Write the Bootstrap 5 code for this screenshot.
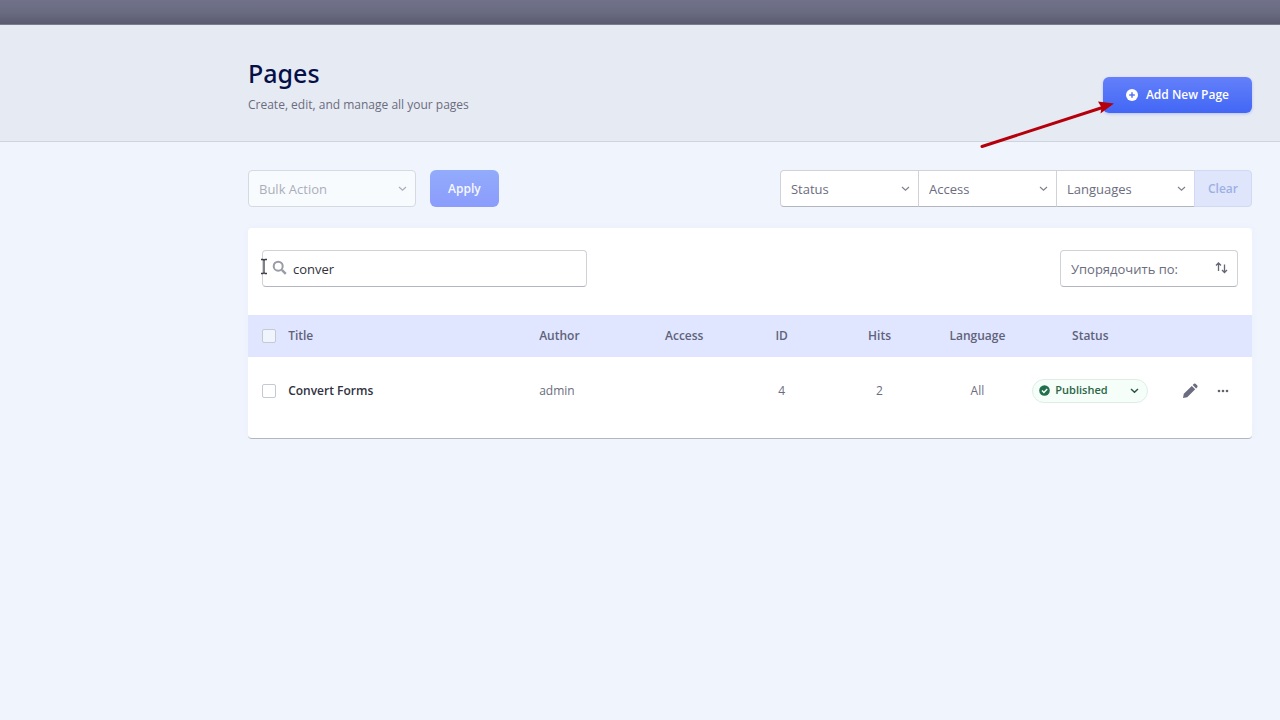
<!DOCTYPE html>
<html lang="en">
<head>
<meta charset="utf-8">
<meta name="viewport" content="width=device-width, initial-scale=1">
<title>Pages</title>
<link href="https://cdn.jsdelivr.net/npm/bootstrap@5.3.0/dist/css/bootstrap.min.css" rel="stylesheet">
<style>
  body { font-family: "Open Sans", "Noto Sans", sans-serif; font-size: 12px; line-height: 18px; color: #6b6c7e; background: #f0f4fd; }
  .topbar { height: 25px; background: linear-gradient(#71728a, #696b80 50%, #5b5c72 94%, #8a8ba0); }
  .gutter { padding-left: 248px; padding-right: 28px; }
  .page-head { background: #e6eaf3; border-bottom: 1px solid #ced4de; padding-top: 31px; padding-bottom: 27px; }
  .page-head h1 { font-family: "Noto Sans", sans-serif; font-size: 25px; line-height: 34px; font-weight: 500; color: #050f48; margin-bottom: 6px; }
  .btn { font-size: 12px; line-height: 18px; font-weight: 600; border-radius: 6px; }
  .add-wrap { margin-top: 20px; }
  .btn-add { height: 36px; padding: 0 23px; color: #fff; background: linear-gradient(#6480fa, #4267f5); border: 0; box-shadow: 0 1px 3px #4267f550; }
  .btn-add:hover { color: #fff; background: #4267f5; }
  .btn-apply { height: 37px; padding: 0 18px; }
  .btn-apply:disabled { color: #f6f8ff; background: linear-gradient(#92abfb, #8b9cfc); border: 0; opacity: 1; }
  .form-select, .form-control { font-size: 13px; line-height: 18px; height: 37px; border: 1px solid #d0d2d8; border-bottom-color: #b3b6bf; border-radius: 4px; color: #6b6c7e; background-color: #fff; }
  .form-select { padding: 0 30px 0 10px; background-size: 9px 9px; background-position: right 8px center;
    background-image: url("data:image/svg+xml,%3Csvg xmlns='http://www.w3.org/2000/svg' viewBox='0 0 9 9'%3E%3Cpath fill='none' stroke='%23808290' stroke-width='1.200' d='M1 3l3.500 3.200L8 3'/%3E%3C/svg%3E"); }
  .toolbar { padding-top: 28px; margin-bottom: 21px; }
  .bulk { width: 168px; }
  .bulk:disabled { color: #abaeba; background-color: #f8fbfe; border-color: #d5d9e2;
    background-image: url("data:image/svg+xml,%3Csvg xmlns='http://www.w3.org/2000/svg' viewBox='0 0 9 9'%3E%3Cpath fill='none' stroke='%23abaeba' stroke-width='1.200' d='M1 3l3.500 3.200L8 3'/%3E%3C/svg%3E"); }
  .bulk-group { gap: 14px; }
  .filters .form-select { width: 139px; margin-right: -1px; border-radius: 0; }
  .filters .form-select:first-child { border-radius: 4px 0 0 4px; }
  .btn-clear { height: 37px; padding: 0 13px; border-radius: 0 4px 4px 0; }
  .btn-clear:disabled { color: #9db0e6; background: #dfe5fa; border: 1px solid #d2daf3; opacity: 1; }
  .panel { background: #fff; border-radius: 4px; border-bottom: 1px solid #b3b6bf; box-shadow: 0 0 6px #e9eefa; padding-bottom: 14px; }
  .panel-tools { padding: 22px 14px 28px; }
  .search { width: 325px; }
  .search .form-control { padding: 0 12px 0 30px; color: #31323d; }
  .search .lens { left: 10px; top: 10px; }
  .search .caret { left: -2px; top: 8px; }
  .order { width: 178px; }
  .order .form-select { background-image: none; }
  .order svg { right: 10px; top: 11px; }
  .over { position: absolute; pointer-events: none; }
  .pages-table { table-layout: fixed; margin: 0; --bs-table-bg: transparent; }
  .pages-table th, .pages-table td { border: 0; padding: 0; vertical-align: middle; color: #6b6c7e; }
  .pages-table thead th { height: 42px; background: #e0e6ff; font-weight: 600; color: #5f6279; }
  .pages-table tbody td, .pages-table tbody th { height: 67px; }
  .pages-table tbody th { font-weight: 600; color: #31323f; }
  .pages-table tr > :first-child { padding-left: 14px; }
  .form-check-input { width: 14px; height: 14px; border: 1px solid #c5c9d2; margin: 0; float: none; background-color: #fff; display: block; }
  .form-check-input[type=checkbox] { border-radius: 2px; }
  thead .form-check-input { background-color: #f0f5fd; }
  .state { width: 116px; }
  .state .form-select { height: 24px; font-size: 11px; font-weight: 600; color: #2b6646; padding: 0 20px 2px 22px; border: 1px solid #dcefe5; border-radius: 12px; background-color: #f6fefa;
    background-image: url("data:image/svg+xml,%3Csvg xmlns='http://www.w3.org/2000/svg' viewBox='0 0 9 9'%3E%3Cpath fill='none' stroke='%23275741' stroke-width='1.500' d='M1 3l3.500 3.200L8 3'/%3E%3C/svg%3E"); }
  .state svg { left: 7px; top: 6px; }
  .actions { gap: 19px; padding-right: 23px; }
  .tool { border: 0; background: none; padding: 0; display: flex; }
  .pointer { left: -124px; top: 20px; }
</style>
</head>
<body>
<div class="topbar"></div>
<header class="page-head gutter d-flex justify-content-between align-items-center">
  <div>
    <h1>Pages</h1>
    <p class="mb-0">Create, edit, and manage all your pages</p>
  </div>
  <div class="add-wrap position-relative">
    <button type="button" class="btn btn-add d-flex align-items-center gap-2">
      <svg width="12" height="12" viewBox="0 0 12 12" aria-hidden="true"><circle cx="6" cy="6" r="6" fill="#fff"/><path d="M6 3.200v5.600M3.200 6h5.600" stroke="#5575f8" stroke-width="1.500"/></svg>
      Add New Page
    </button>
    <svg class="over pointer" width="138" height="54" viewBox="0 0 138 54" aria-hidden="true"><path d="M3 49.500L122 11" stroke="#b5000c" stroke-width="3" stroke-linecap="round"/><path d="M135 6.500L119 4.500L122.500 10.500L121.500 16.500Z" fill="#b5000c"/></svg>
  </div>
</header>

<main class="gutter">
  <div class="toolbar d-flex justify-content-between">
    <div class="d-flex bulk-group">
      <select class="form-select bulk" aria-label="Bulk action" disabled><option>Bulk Action</option></select>
      <button type="button" class="btn btn-apply" disabled>Apply</button>
    </div>
    <div class="d-flex filters">
      <select class="form-select" aria-label="Status"><option>Status</option></select>
      <select class="form-select" aria-label="Access"><option>Access</option></select>
      <select class="form-select" aria-label="Languages"><option>Languages</option></select>
      <button type="button" class="btn btn-clear" disabled>Clear</button>
    </div>
  </div>

  <section class="panel">
    <div class="panel-tools d-flex justify-content-between">
      <div class="search position-relative">
        <input class="form-control" type="text" value="conver" aria-label="Search pages">
        <svg class="over lens" width="15" height="15" viewBox="0 0 15 15" fill="none" stroke="#999ba6" aria-hidden="true"><circle cx="6.200" cy="6.200" r="4.500" stroke-width="2"/><path d="M9.800 9.800l4 4" stroke-width="2.400"/></svg>
        <svg class="over caret" width="8" height="17" viewBox="0 0 8 17" fill="none" stroke="#3d3e4a" aria-hidden="true"><path d="M1 1.500h2l1 1 1-1h2M4 2v13M1 15.500h2l1-1 1 1h2" stroke-width="1.300"/></svg>
      </div>
      <div class="order position-relative">
        <select class="form-select" aria-label="Упорядочить по"><option>Упорядочить по:</option></select>
        <svg class="over" width="13" height="14" viewBox="0 0 13 14" fill="none" stroke="#646675" stroke-width="1.300" aria-hidden="true"><path d="M3.500 10V2M1 4.500L3.500 2 6 4.500M9.500 3.500v8M7 9L9.500 11.500 12 9"/></svg>
      </div>
    </div>

    <table class="table pages-table">
      <colgroup>
        <col style="width:4%"><col style="width:25%"><col style="width:9.600%"><col style="width:9.700%"><col style="width:9.700%"><col style="width:9.800%"><col style="width:9.700%"><col style="width:12.800%"><col style="width:9.700%">
      </colgroup>
      <thead>
        <tr>
          <th><input class="form-check-input" type="checkbox" aria-label="Select all"></th>
          <th scope="col">Title</th>
          <th scope="col">Author</th>
          <th scope="col" class="text-center">Access</th>
          <th scope="col" class="text-center">ID</th>
          <th scope="col" class="text-center">Hits</th>
          <th scope="col" class="text-center">Language</th>
          <th scope="col" class="text-center">Status</th>
          <th></th>
        </tr>
      </thead>
      <tbody>
        <tr>
          <td><input class="form-check-input" type="checkbox" aria-label="Select Convert Forms"></td>
          <th scope="row">Convert Forms</th>
          <td>admin</td>
          <td></td>
          <td class="text-center">4</td>
          <td class="text-center">2</td>
          <td class="text-center">All</td>
          <td>
            <div class="state position-relative mx-auto">
              <select class="form-select" aria-label="Page status"><option>Published</option></select>
              <svg class="over" width="11" height="11" viewBox="0 0 11 11" aria-hidden="true"><circle cx="5.500" cy="5.500" r="5.300" fill="#20704b"/><path d="M3 5.600l1.900 1.900L8.200 4" fill="none" stroke="#fff" stroke-width="1.400"/></svg>
            </div>
          </td>
          <td>
            <div class="d-flex align-items-center justify-content-end actions">
              <button type="button" class="tool" aria-label="Edit"><svg width="16" height="16" viewBox="0 0 16 16" fill="#6b6c80"><path d="M1 15l.8-4.200L9.800 2.900l3.400 3.400-8 7.900zM10.700 2l1.200-1.200q.8-.6 1.600 0l1.800 1.800q.6.800 0 1.600l-1.200 1.200z"/></svg></button>
              <button type="button" class="tool" aria-label="More actions"><svg width="12" height="4" viewBox="0 0 12 4" fill="#62636f"><circle cx="2" cy="2" r="1.300"/><circle cx="6" cy="2" r="1.300"/><circle cx="10" cy="2" r="1.300"/></svg></button>
            </div>
          </td>
        </tr>
      </tbody>
    </table>
  </section>
</main>
<script src="https://cdn.jsdelivr.net/npm/bootstrap@5.3.0/dist/js/bootstrap.bundle.min.js"></script>
</body>
</html>
